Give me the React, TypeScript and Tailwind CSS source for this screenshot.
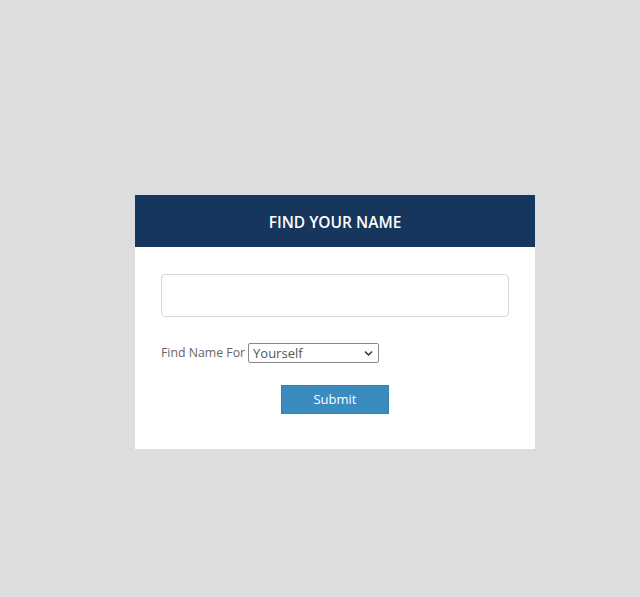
import React from "react";

export default function App() {
  return (
    <div className="w-[640px] h-[597px] bg-[#dcdddf] pt-[195px] pl-[135px]" style={{ fontFamily: '"Open Sans", sans-serif' }}>
      <div className="w-[400px] bg-white">
        <div className="h-[52px] bg-[#17365d] flex items-center justify-center pt-[3px]">
          <h1 className="text-white text-[15.5px] font-semibold">FIND YOUR NAME</h1>
        </div>
        <div className="pt-[27px] pb-[35px] px-[26px]">
          <input
            type="text"
            className="block w-[348px] h-[43px] border border-[#d6d6d6] rounded-[4px] outline-none px-3"
          />
          <div className="flex items-center mt-[26px] h-[20px]">
            <span className="text-[12.3px] text-[#666666] mr-[3px]">Find Name For</span>
            <div className="relative w-[131px] h-[20px] border border-[#8a8a8a] rounded-[2px] flex items-center pl-[4px] pt-[1px]">
              <span className="text-[13px] text-[#555555] leading-none">Yourself</span>
              <svg className="absolute right-[5px] top-[6px]" width="9" height="7" viewBox="0 0 9 7">
                <path d="M1 1.5 L4.5 5 L8 1.5" fill="none" stroke="#333" strokeWidth="1.5" />
              </svg>
            </div>
          </div>
          <div className="flex justify-center mt-[22px]">
            <button className="w-[108px] h-[29px] bg-[#3a8cc0] border border-[#3580b0] text-white text-[13px]">
              Submit
            </button>
          </div>
        </div>
      </div>
    </div>
  );
}
